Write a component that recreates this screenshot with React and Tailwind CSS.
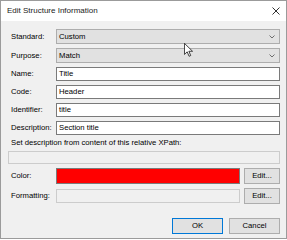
import React from 'react';

// Small down chevron used by the combo boxes
const Chevron = () => (
  <svg width="6" height="4" viewBox="0 0 6 4" className="shrink-0">
    <path d="M0.5 0.5L3 3L5.5 0.5" fill="none" stroke="#606060" strokeWidth="0.9" />
  </svg>
);

const Label = ({ children }) => (
  <div className="w-[48px] shrink-0 pl-[3px] text-black">{children}</div>
);

const Combo = ({ label, value, className }) => (
  <div className={`flex items-center ${className}`}>
    <Label>{label}</Label>
    <div className="flex-1 h-[15px] bg-[#e1e1e1] border border-[#adadad] flex items-center justify-between pl-[2px] pr-[4px]">
      <span>{value}</span>
      <Chevron />
    </div>
  </div>
);

const TextField = ({ label, value, className }) => (
  <div className={`flex items-center ${className}`}>
    <Label>{label}</Label>
    <div className="flex-1 h-[14px] bg-white border border-[#7a7a7a] flex items-center pl-[2px]">
      {value}
    </div>
  </div>
);

const WinButton = ({ children, primary, className }) => (
  <div
    className={`h-[16px] flex items-center justify-center bg-[#e1e1e1] border ${
      primary ? 'border-[#0078d7]' : 'border-[#adadad]'
    } ${className}`}
  >
    {children}
  </div>
);

// Mouse pointer captured in the screenshot
const Pointer = () => (
  <svg width="9" height="14" viewBox="0 0 12 19" className="absolute left-[184px] top-[43px]">
    <path
      d="M0.5 0.5V15.5L4.2 12L6.8 18L9 17L6.5 11.2H11.5Z"
      fill="#ffffff"
      stroke="#000000"
      strokeWidth="1"
      strokeLinejoin="round"
    />
  </svg>
);

export default function App() {
  return (
    <div
      className="relative w-[287px] h-[240px] bg-white text-[7.7px] leading-none text-black"
      style={{ fontFamily: '"Liberation Sans", Arial, sans-serif' }}
    >
      <div className="h-[239px] border border-[#9b9b9b] flex flex-col">
        {/* Title bar */}
        <div className="h-[20px] bg-white flex items-center justify-between pl-[6px] pr-[6px] shrink-0">
          <span className="text-[8px] text-[#1a1a1a]">Edit Structure Information</span>
          <svg width="8" height="8" viewBox="0 0 8 8">
            <path d="M0.5 0.5L7.5 7.5M7.5 0.5L0.5 7.5" stroke="#1a1a1a" strokeWidth="0.9" />
          </svg>
        </div>

        {/* Body */}
        <div className="flex-1 bg-[#f0f0f0] flex flex-col pt-[8px] pl-[7px] pr-[6px]">
          <Combo label="Standard:" value="Custom" />
          <Combo label="Purpose:" value="Match" className="mt-[4px]" />
          <TextField label="Name:" value="Title" className="mt-[4px]" />
          <TextField label="Code:" value="Header" className="mt-[4px]" />
          <TextField label="Identifier:" value="title" className="mt-[4px]" />
          <TextField label="Description:" value="Section title" className="mt-[4px]" />

          <div className="mt-[3px] h-[10px] flex items-center pl-[3px]">
            Set description from content of this relative XPath:
          </div>
          <div className="mt-[3px] h-[13px] bg-[#f0f0f0] border border-[#cccccc]" />

          {/* Color */}
          <div className="mt-[4px] flex items-center">
            <Label>Color:</Label>
            <div className="flex-1 h-[16px] bg-[#ff0000] border border-[#7a7a7a]" />
            <WinButton className="w-[36px] ml-[4px] h-[15px]">Edit...</WinButton>
          </div>

          {/* Formatting */}
          <div className="mt-[4px] flex items-center">
            <Label>Formatting:</Label>
            <div className="flex-1 h-[14px] bg-[#f0f0f0] border border-[#cccccc]" />
            <WinButton className="w-[36px] ml-[4px] h-[15px]">Edit...</WinButton>
          </div>

          {/* Footer buttons */}
          <div className="mt-[14px] flex justify-end gap-[6px]">
            <WinButton primary className="w-[51px]">OK</WinButton>
            <WinButton className="w-[51px]">Cancel</WinButton>
          </div>
        </div>
      </div>
      <Pointer />
    </div>
  );
}
